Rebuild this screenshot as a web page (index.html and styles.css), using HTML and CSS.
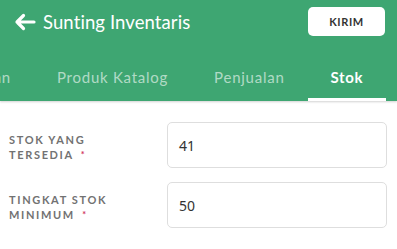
FILE: index.html
```html
<!DOCTYPE html>
<html lang="id">
<head>
<meta charset="utf-8">
<title>Sunting Inventaris</title>
<link rel="stylesheet" href="styles.css">
</head>
<body>
<header class="appbar">
  <div class="topbar">
    <div class="title-group">
      <svg class="back" width="22" height="18" viewBox="0 0 22 18" aria-hidden="true">
        <path d="M20 9 H3 M9.5 2.5 L3 9 L9.5 15.5" fill="none" stroke="#fff" stroke-width="3.2" stroke-linecap="round" stroke-linejoin="round"/>
      </svg>
      <h1 class="title">Sunting Inventaris</h1>
    </div>
    <button class="send">KIRIM</button>
  </div>
  <nav class="tabs">
    <div class="tab">Ringkasan</div>
    <div class="tab">Produk Katalog</div>
    <div class="tab">Penjualan</div>
    <div class="tab active">Stok</div>
  </nav>
</header>
<main class="form">
  <div class="field">
    <label class="label">STOK YANG<br>TERSEDIA <span class="req">*</span></label>
    <div class="input">41</div>
  </div>
  <div class="field">
    <label class="label">TINGKAT STOK<br>MINIMUM <span class="req">*</span></label>
    <div class="input">50</div>
  </div>
</main>
</body>
</html>
```
FILE: styles.css
```css
* { box-sizing: border-box; }
html, body { margin: 0; padding: 0; background: #fff; }
body { width: 397px; height: 249px; overflow: hidden; font-family: "Lato", "Noto Sans", sans-serif; }

.appbar {
  background: #3ea672;
  box-shadow: 0 1px 2px rgba(0,0,0,0.18);
}
.topbar {
  height: 44px;
  display: flex;
  align-items: center;
  justify-content: space-between;
  padding: 0 12px 0 14px;
}
.title-group { display: flex; align-items: center; gap: 7px; margin-top: -1px; }
.back { display: block; }
.title {
  margin: 0;
  font-size: 18.5px;
  font-weight: 400;
  color: #fff;
  letter-spacing: 0.1px;
}
.send {
  width: 77px;
  height: 29px;
  margin-top: -1px;
  border: none;
  border-radius: 5px;
  background: #fff;
  color: #333;
  font-family: "Lato", sans-serif;
  font-weight: 700;
  font-size: 11px;
  letter-spacing: 0.6px;
}
.tabs {
  height: 57px;
  display: flex;
  justify-content: flex-end;
  padding-right: 11px;
  overflow: hidden;
}
.tab {
  flex: none;
  height: 57px;
  padding: 12px 23px 0;
  display: flex;
  align-items: center;
  font-size: 15px;
  letter-spacing: 0.75px;
  color: rgba(255,255,255,0.6);
  border-bottom: 3px solid transparent;
}
.tab.active {
  color: #fff;
  font-weight: 700;
  letter-spacing: 0.6px;
  border-bottom-color: #fff;
}

.form { padding: 21px 10px 0 9px; display: flex; flex-direction: column; gap: 14px; }
.field { display: flex; align-items: center; }
.label {
  width: 158px;
  flex: none;
  font-size: 11px;
  font-weight: 700;
  line-height: 15px;
  letter-spacing: 1.65px;
  color: #727272;
  padding-top: 3px;
}
.req { color: #d0335c; font-size: 9px; margin-left: 3px; vertical-align: 1px; }
.input {
  flex: 1;
  height: 46px;
  border: 1px solid #dedede;
  border-radius: 5px;
  padding: 0 11px;
  display: flex;
  align-items: center;
  font-family: "Noto Sans", sans-serif;
  font-size: 14px;
  color: #333;
}
```
